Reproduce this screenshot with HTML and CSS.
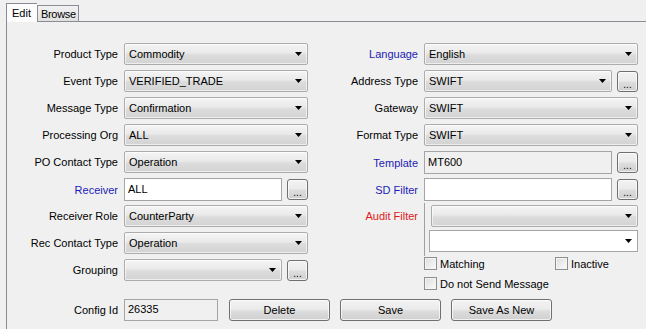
FILE: index.html
```html
<!DOCTYPE html>
<html>

<head>
	<meta charset="utf-8" />
	<title>Message Config</title>
	<link rel="stylesheet" href="styles.css">
</head>

<body>
	<div class="tabs">
		<div class="tab active">Edit</div>
		<div class="tab">Browse</div>
	</div>
	<div class="panel">
		<div class="form">
			<div class="col left">
				<div class="row"><span class="lbl">Product Type</span><div class="combo"><span>Commodity</span><i class="arrow"></i></div></div>
				<div class="row"><span class="lbl">Event Type</span><div class="combo"><span>VERIFIED_TRADE</span><i class="arrow"></i></div></div>
				<div class="row"><span class="lbl">Message Type</span><div class="combo"><span>Confirmation</span><i class="arrow"></i></div></div>
				<div class="row"><span class="lbl">Processing Org</span><div class="combo"><span>ALL</span><i class="arrow"></i></div></div>
				<div class="row"><span class="lbl">PO Contact Type</span><div class="combo"><span>Operation</span><i class="arrow"></i></div></div>
				<div class="row"><span class="lbl blue">Receiver</span><div class="pick"><div class="field">ALL</div><button class="dots">...</button></div></div>
				<div class="row"><span class="lbl">Receiver Role</span><div class="combo"><span>CounterParty</span><i class="arrow"></i></div></div>
				<div class="row"><span class="lbl">Rec Contact Type</span><div class="combo"><span>Operation</span><i class="arrow"></i></div></div>
				<div class="row"><span class="lbl">Grouping</span><div class="pick"><div class="combo"><span></span><i class="arrow"></i></div><button class="dots">...</button></div></div>
			</div>
			<div class="col right">
				<div class="row"><span class="lbl blue">Language</span><div class="combo"><span>English</span><i class="arrow"></i></div></div>
				<div class="row"><span class="lbl">Address Type</span><div class="pick"><div class="combo"><span>SWIFT</span><i class="arrow"></i></div><button class="dots">...</button></div></div>
				<div class="row"><span class="lbl">Gateway</span><div class="combo"><span>SWIFT</span><i class="arrow"></i></div></div>
				<div class="row"><span class="lbl">Format Type</span><div class="combo"><span>SWIFT</span><i class="arrow"></i></div></div>
				<div class="row"><span class="lbl blue">Template</span><div class="pick"><div class="field off">MT600</div><button class="dots">...</button></div></div>
				<div class="row"><span class="lbl blue">SD Filter</span><div class="pick"><div class="field"></div><button class="dots">...</button></div></div>
				<div class="row audit">
					<span class="lbl red">Audit Filter</span>
					<div class="audit-box">
						<div class="combo"><span></span><i class="arrow"></i></div>
						<div class="combo edit"><span></span><i class="arrow"></i></div>
					</div>
				</div>
				<div class="checks">
					<label class="check"><i class="box"></i>Matching</label>
					<label class="check"><i class="box"></i>Inactive</label>
					<label class="check wide"><i class="box"></i>Do not Send Message</label>
				</div>
			</div>
		</div>
		<div class="footer">
			<span class="lbl">Config Id</span>
			<div class="field off id">26335</div>
			<div class="actions">
				<button class="btn">Delete</button>
				<button class="btn">Save</button>
				<button class="btn">Save As New</button>
			</div>
		</div>
	</div>
</body>

</html>
```

FILE: styles.css
```css
* {
	box-sizing: border-box;
}

body {
	margin: 0;
	background-color: #f0f0f0;
	font-family: "Liberation Sans", Arial, sans-serif;
	font-size: 11px;
	color: #000000;
	height: 329px;
	overflow: hidden;
}

/* tabs */
.tabs {
	display: flex;
	align-items: flex-end;
	height: 21px;
	padding-left: 6px;
}

.tab {
	height: 16px;
	padding: 2px 2px 0 3px;
	letter-spacing: -0.3px;
	border: 1px solid #898c95;
	border-bottom: none;
	background: linear-gradient(#f2f2f2, #e0e0e0);
}

.tab.active {
	height: 19px;
	padding: 3px 6px 0 5px;
	letter-spacing: 0;
	background: #fcfcfc;
	margin-bottom: -1px;
	position: relative;
	border-right: none;
}

.panel {
	border-top: 1px solid #898c95;
	border-left: 1px solid #898c95;
	margin-left: 6px;
	height: 308px;
	padding-top: 21px;
}

/* form columns */
.form {
	display: flex;
	gap: 6px;
	align-items: flex-start;
}

.col {
	display: flex;
	flex-direction: column;
	gap: 5px;
}

.row {
	display: grid;
	grid-template-columns: 111px 184px;
	column-gap: 6px;
	height: 22px;
	align-items: center;
}

.right .row {
	grid-template-columns: 104px 214px;
}

.lbl {
	text-align: right;
	white-space: nowrap;
}

.blue {
	color: #1c1cb4;
}

.red {
	color: #e01818;
}

/* controls */
.combo {
	display: flex;
	align-items: center;
	height: 22px;
	padding: 0 5px 0 4px;
	border: 1px solid #acacac;
	border-radius: 2px;
	background: linear-gradient(#f5f5f5, #e9e9e9 45%, #dcdcdc 55%, #d3d3d3);
	box-shadow: inset 0 0 0 1px rgba(255, 255, 255, 0.6);
}

.combo.edit {
	background: #ffffff;
	box-shadow: none;
	border-color: #a5a5a5;
	border-radius: 0;
	margin-left: -2px;
}

.arrow {
	margin-left: auto;
	width: 7px;
	height: 4px;
	background: #000000;
	clip-path: polygon(0 0, 100% 0, 50% 100%);
}

.field {
	height: 23px;
	padding: 4px 3px;
	border: 1px solid #a5a5a5;
	background: #ffffff;
}

.field.off {
	background: #f0f0f0;
}

.pick {
	display: flex;
	align-items: center;
	gap: 5px;
}

.pick > .field,
.pick > .combo {
	flex: 1;
}

button {
	font-family: inherit;
	font-size: 11px;
	color: #000000;
	border: 1px solid #707070;
	border-radius: 3px;
	background: linear-gradient(#f2f2f2, #ebebeb 45%, #dddddd 55%, #cfcfcf);
	box-shadow: inset 0 0 0 1px rgba(255, 255, 255, 0.7);
	padding: 0;
	cursor: default;
}

.dots {
	width: 21px;
	height: 21px;
	line-height: 20px;
	font-size: 10px;
	letter-spacing: 0;
	padding-top: 3px;
}

/* audit filter block */
.row.audit {
	height: auto;
	align-items: start;
	margin-top: -2px;
}

.row.audit .lbl {
	padding-top: 7px;
}

.audit-box {
	display: flex;
	flex-direction: column;
	gap: 3px;
	border-left: 1px solid #a0a0a0;
	padding: 2px 0 4px 6px;
}

/* checkboxes */
.checks {
	display: grid;
	grid-template-columns: 131px auto;
	row-gap: 7px;
	margin: -4px 0 0 110px;
}

.check {
	display: flex;
	align-items: center;
	gap: 3px;
	height: 13px;
	white-space: nowrap;
}

.check.wide {
	grid-column: 1 / 3;
}

.box {
	width: 13px;
	height: 13px;
	border: 1px solid #8e8f8f;
	background: linear-gradient(135deg, #dcdcdc, #fbfbfb);
	box-shadow: inset 0 0 0 1px #f4f4f4;
}

/* bottom bar */
.footer {
	display: flex;
	align-items: center;
	margin-top: 9px;
	height: 22px;
}

.footer .lbl {
	width: 111px;
}

.field.id {
	width: 94px;
	height: 22px;
	margin-left: 6px;
	padding: 3px 3px;
}

.actions {
	display: flex;
	gap: 10px;
	margin-left: 11px;
}

.btn {
	width: 101px;
	height: 22px;
}
```
